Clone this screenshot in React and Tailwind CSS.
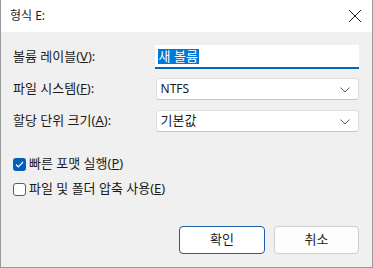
export default function App() {
  const font = { fontFamily: '"Segoe UI", "Noto Sans", "Noto Sans CJK KR", sans-serif' };
  const Chevron = () => (
    <svg width="10" height="6" viewBox="0 0 10 6" className="absolute right-[8px] top-[8px]">
      <path d="M0.5 0.5 L5 5 L9.5 0.5" fill="none" stroke="#606060" strokeWidth="1" />
    </svg>
  );
  return (
    <div
      className="w-[373px] h-[268px] flex flex-col bg-[#f0f0f0] border-x border-b border-[#9a9a9a] text-[13px] text-[#1a1a1a] overflow-hidden"
      style={font}
    >
      <div className="h-[32px] bg-white flex items-center justify-between pl-[9px] pr-[8px] shrink-0">
        <span className="text-[12px]">형식 E:</span>
        <svg width="14" height="14" viewBox="0 0 14 14" className="mr-[2px]">
          <path d="M1 1 L13 13 M13 1 L1 13" stroke="#202020" strokeWidth="1" />
        </svg>
      </div>
      <div className="flex flex-col pl-[12px] pr-[13px] pt-[13px]">
        <div className="flex items-center h-[24px]">
          <span className="w-[142px]">볼륨 레이블(<u>V</u>):</span>
          <div className="w-[205px] h-[24px] bg-white border-b-2 border-[#0067c0] flex items-center pl-[3px]">
            <span className="bg-[#0078d7] text-white px-[1px] leading-[15px]">새 볼륨</span>
          </div>
        </div>
        <div className="flex items-center h-[22px] mt-[9px]">
          <span className="w-[143px]">파일 시스템(<u>F</u>):</span>
          <div className="relative w-[204px] h-[22px] bg-white border border-[#dedede] border-b-[#c4c4c4] rounded-[3px] flex items-center pl-[4px]">
            <span className="text-[12px]">NTFS</span>
            <Chevron />
          </div>
        </div>
        <div className="flex items-center h-[22px] mt-[10px]">
          <span className="w-[143px]">할당 단위 크기(<u>A</u>):</span>
          <div className="relative w-[204px] h-[22px] bg-white border border-[#dedede] border-b-[#c4c4c4] rounded-[3px] flex items-center pl-[4px]">
            <span>기본값</span>
            <Chevron />
          </div>
        </div>
        <div className="flex items-center mt-[25px] h-[14px]">
          <div className="w-[13px] h-[13px] rounded-[3px] bg-[#005fb8] flex items-center justify-center mr-[3px]">
            <svg width="9" height="7" viewBox="0 0 9 7">
              <path d="M1 3.5 L3.3 5.8 L8 1" fill="none" stroke="white" strokeWidth="1.2" />
            </svg>
          </div>
          <span>빠른 포맷 실행(<u>P</u>)</span>
        </div>
        <div className="flex items-center mt-[11px] h-[14px]">
          <div className="w-[13px] h-[13px] rounded-[3px] border border-[#5c5c5c] bg-white mr-[3px]" />
          <span>파일 및 폴더 압축 사용(<u>E</u>)</span>
        </div>
        <div className="flex justify-end mt-[30px] gap-[9px] pr-[0px]">
          <button className="w-[86px] h-[28px] rounded-[4px] bg-white border border-[#1a5fa8] text-[13px]" style={font}>확인</button>
          <button className="w-[85px] h-[28px] rounded-[4px] bg-[#fdfdfd] border border-[#d0d0d0] text-[13px]" style={font}>취소</button>
        </div>
      </div>
    </div>
  );
}
